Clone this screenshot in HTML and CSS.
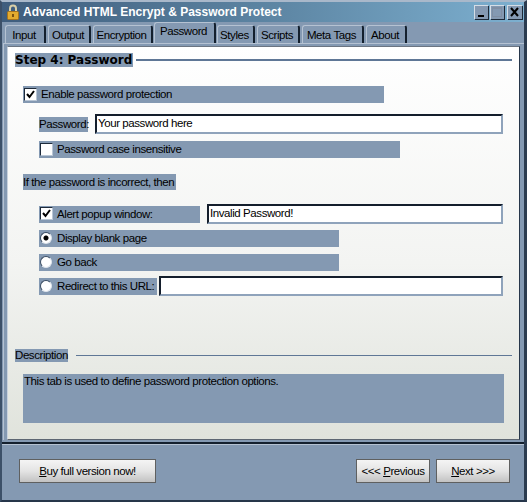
FILE: index.html
```html
<!DOCTYPE html>
<html lang="en">
<head>
    <meta charset="UTF-8">
    <title>Advanced HTML Encrypt &amp; Password Protect</title>
    <link rel="stylesheet" href="styles.css">
</head>
<body>
    <div class="window">
        <div class="titlebar">
            <svg class="lock" width="16" height="18" viewBox="0 0 16 18">
                <path d="M5 9V5.5a3 3 0 0 1 6 0V9" fill="none" stroke="#d8cfa8" stroke-width="2"/>
                <rect x="2.5" y="8.5" width="11" height="8" rx="1" fill="#e3ab2e" stroke="#a8741a"/>
                <rect x="7" y="11" width="2" height="3" fill="#7a5210"/>
            </svg>
            <span class="title">Advanced HTML Encrypt &amp; Password Protect</span>
            <div class="controls">
                <span class="ctl ctl-min"><svg width="15" height="14" viewBox="0 0 15 14"><rect x="4" y="10" width="6" height="2" fill="#000"/></svg></span>
                <span class="ctl ctl-max"><svg width="15" height="14" viewBox="0 0 15 14"><rect x="2.5" y="2.5" width="9" height="9" fill="none" stroke="#7f8ea3"/><rect x="2" y="2" width="10" height="2" fill="#7f8ea3"/></svg></span>
                <span class="ctl ctl-close"><svg width="15" height="14" viewBox="0 0 15 14"><path d="M4 3l7 8M11 3l-7 8" stroke="#000" stroke-width="2"/></svg></span>
            </div>
        </div>

        <div class="tabs">
            <span class="tab tab-input">Input</span>
            <span class="tab tab-output">Output</span>
            <span class="tab tab-encryption">Encryption</span>
            <span class="tab tab-password active">Password</span>
            <span class="tab tab-styles">Styles</span>
            <span class="tab tab-scripts">Scripts</span>
            <span class="tab tab-meta">Meta Tags</span>
            <span class="tab tab-about">About</span>
        </div>

        <div class="tab-body">
            <div class="panel">
                <div class="section-head step-head">
                    <span class="step-title">Step 4: Password</span>
                    <span class="rule"></span>
                </div>

                <div class="row row-enable">
                    <span class="check checked"><svg width="9" height="9" viewBox="0 0 9 9"><path d="M1 4l2.5 3L8 1" fill="none" stroke="#000" stroke-width="2"/></svg></span>
                    Enable password protection
                </div>

                <div class="field-row field-password">
                    <span class="shade pw-label">Password:</span>
                    <div class="textbox pw-input">Your password here</div>
                </div>

                <div class="row row-case">
                    <span class="check"></span>
                    Password case insensitive
                </div>

                <div class="shade if-label">If the password is incorrect, then</div>

                <div class="field-row field-alert">
                    <div class="row row-alert">
                        <span class="check checked"><svg width="9" height="9" viewBox="0 0 9 9"><path d="M1 4l2.5 3L8 1" fill="none" stroke="#000" stroke-width="2"/></svg></span>
                        Alert popup window:
                    </div>
                    <div class="textbox alert-input">Invalid Password!</div>
                </div>

                <div class="row row-blank">
                    <span class="radio selected"></span>
                    Display blank page
                </div>

                <div class="row row-back">
                    <span class="radio"></span>
                    Go back
                </div>

                <div class="field-row field-redirect">
                    <div class="row row-redirect">
                        <span class="radio"></span>
                        Redirect to this URL:
                    </div>
                    <div class="textbox redirect-input"></div>
                </div>

                <div class="section-head desc-head">
                    <span class="shade desc-title">Description</span>
                    <span class="rule"></span>
                </div>
                <div class="desc-box">This tab is used to define password protection options.</div>
            </div>
        </div>

        <div class="footer">
            <button class="btn btn-buy"><u>B</u>uy full version now!</button>
            <div class="nav">
                <button class="btn btn-nav">&lt;&lt;&lt; <u>P</u>revious</button>
                <button class="btn btn-nav"><u>N</u>ext &gt;&gt;&gt;</button>
            </div>
        </div>
    </div>
</body>
</html>
```

FILE: styles.css
```css
* {
    box-sizing: border-box;
}

body {
    margin: 0;
    font-family: "Liberation Sans", Arial, sans-serif;
    font-size: 11.5px;
    letter-spacing: -0.42px;
    color: #000;
    background-color: #8499b2;
}

.window {
    width: 527px;
    height: 502px;
    display: flex;
    flex-direction: column;
    background-color: #8499b2;
    border-top: 2px solid #a9b8ca;
    border-left: 2px solid #3c5068;
    border-right: 3px solid #2c3c50;
    border-bottom: 2px solid #26364a;
}

.titlebar {
    height: 20px;
    flex: none;
    display: flex;
    align-items: center;
    padding: 0 2px 0 3px;
    background: linear-gradient(90deg, #3f5d7d 0%, #5f88a6 55%, #7db0d0 100%);
}

.lock {
    flex: none;
}

.title {
    margin-left: 2px;
    font-size: 12px;
    font-weight: bold;
    color: #fff;
    letter-spacing: 0;
    white-space: nowrap;
}

.controls {
    margin-left: auto;
    display: flex;
    gap: 2px;
}

.ctl {
    width: 14px;
    height: 14px;
    display: block;
    background-color: #8499b2;
    border-top: 1px solid #d5dde6;
    border-left: 1px solid #d5dde6;
    box-shadow: 1px 1px 0 #1e2a38;
}

.ctl-close {
    width: 15px;
    margin-left: 1px;
}

.ctl svg {
    display: block;
    margin: -1px 0 0 -1px;
}

.tabs {
    height: 21px;
    flex: none;
    display: flex;
    align-items: flex-end;
    padding-left: 3px;
}

.tab {
    height: 18px;
    line-height: 18px;
    margin-right: 2px;
    padding-right: 2px;
    text-align: center;
    border-top: 1px solid #b5c2d2;
    border-left: 1px solid #b5c2d2;
    border-right: 2px solid #14202e;
    border-radius: 3px 3px 0 0;
}

.tab.active {
    height: 21px;
    line-height: 17px;
    margin: 0 1px 0 -1px;
}

.tab-input { width: 41px; }
.tab-output { width: 43px; }
.tab-encryption { width: 60px; }
.tab-password { width: 62px; }
.tab-styles { width: 38px; }
.tab-scripts { width: 43px; }
.tab-meta { width: 62px; }
.tab-about { width: 41px; }

.tab-body {
    flex: none;
    margin-left: 1px;
    padding: 2px 0 0 3px;
    border-top: 1px solid #b5c2d2;
    border-left: 1px solid #b5c2d2;
}

.panel {
    width: 513px;
    height: 394px;
    background: linear-gradient(180deg, #ffffff 0%, #f3f4f2 55%, #e0e3dc 100%);
    border: 1px solid #6b7582;
    border-left-color: #c8d2de;
    border-right-color: #26364a;
    border-bottom-color: #5d6672;
    overflow: hidden;
}

.shade,
.row,
.desc-box {
    background-color: #8499b2;
}

.section-head {
    display: flex;
    align-items: center;
    margin-left: 7px;
    margin-right: 7px;
}

.step-head {
    margin-top: 6px;
    height: 14px;
}

.step-title {
    height: 14px;
    line-height: 14px;
    padding-right: 1px;
    font-family: "DejaVu Sans", sans-serif;
    font-size: 12px;
    font-weight: bold;
    letter-spacing: 0;
    background-color: #8499b2;
    white-space: nowrap;
}

.rule {
    flex: 1;
    height: 2px;
    margin-left: 3px;
    background-color: #5f7796;
}

.row {
    height: 17px;
    padding-bottom: 1px;
    display: flex;
    align-items: center;
    white-space: nowrap;
}

.check {
    width: 13px;
    height: 13px;
    flex: none;
    margin-right: 4px;
    padding: 1px;
    background-color: #fff;
    border: 1px solid #1d2a3a;
    border-right-color: #b9c6d5;
    border-bottom-color: #b9c6d5;
}

.check svg {
    display: block;
}

.radio {
    width: 12px;
    height: 12px;
    flex: none;
    margin-left: 1px;
    margin-right: 5px;
    border-radius: 50%;
    background-color: #fff;
    border: 1px solid #3a4c62;
    border-right-color: #dfe5ec;
    border-bottom-color: #dfe5ec;
}

.radio.selected {
    background: radial-gradient(circle, #000 0, #000 2px, #fff 3px);
}

.row-enable {
    width: 361px;
    margin: 19px 0 0 15px;
    padding-left: 1px;
}

.field-row {
    display: flex;
    align-items: center;
    height: 20px;
    margin-left: 31px;
}

.field-password {
    margin-top: 11px;
}

.pw-label {
    width: 49px;
    height: 15px;
    line-height: 15px;
    text-align: center;
}

.textbox {
    height: 20px;
    line-height: 15px;
    padding-left: 1px;
    background-color: #fff;
    border: 2px solid #8fa3bb;
    border-top-color: #141e2c;
    border-left-color: #141e2c;
    white-space: nowrap;
}

.pw-input {
    width: 408px;
    margin-left: 7px;
}

.row-case {
    width: 361px;
    margin: 7px 0 0 31px;
    padding-left: 1px;
}

.if-label {
    width: 153px;
    height: 16px;
    line-height: 16px;
    margin: 16px 0 0 15px;
    white-space: nowrap;
}

.field-alert {
    margin-top: 14px;
}

.row-alert {
    width: 161px;
    padding-left: 1px;
}

.alert-input {
    width: 296px;
    margin-left: 7px;
}

.row-blank,
.row-back {
    width: 300px;
    margin-left: 31px;
}

.row-blank {
    margin-top: 6px;
}

.row-back {
    margin-top: 7px;
}

.field-redirect {
    margin-top: 5px;
}

.row-redirect {
    width: 118px;
}

.redirect-input {
    width: 344px;
    margin-left: 2px;
}

.desc-head {
    margin-top: 53px;
    height: 13px;
}

.desc-title {
    width: 53px;
    height: 13px;
    line-height: 13px;
    flex: none;
}

.desc-head .rule {
    margin-left: 8px;
    height: 1px;
}

.desc-box {
    width: 481px;
    height: 49px;
    margin: 12px 0 0 15px;
    padding: 1px;
}

.footer {
    flex: 1;
    display: flex;
    justify-content: space-between;
    align-items: flex-start;
    margin-top: 2px;
    padding: 15px 14px 0 17px;
    border-top: 2px solid #14202e;
    box-shadow: inset 0 1px 0 #b5c2d2;
}

.nav {
    display: flex;
    gap: 6px;
}

.btn {
    height: 24px;
    padding: 0;
    font-family: "Liberation Sans", Arial, sans-serif;
    font-size: 11.5px;
    letter-spacing: -0.42px;
    color: #000;
    background: linear-gradient(180deg, #f4f4f4 0%, #e4e4e4 50%, #c2c2c2 100%);
    border: 1px solid #5f6060;
    outline: 0;
}

.btn-buy {
    width: 137px;
}

.btn-nav {
    width: 74px;
}
```
